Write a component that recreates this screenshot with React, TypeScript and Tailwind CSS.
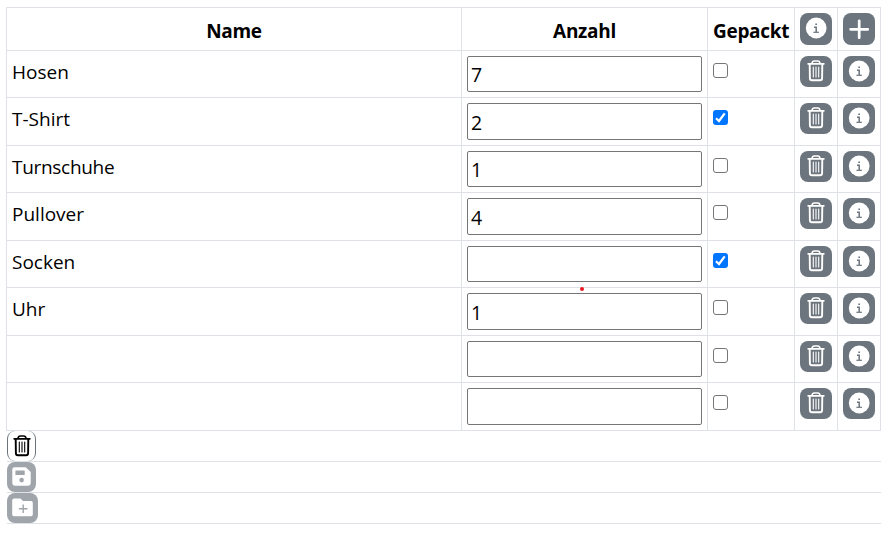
import { ReactNode } from "react";

type Item = { name: string; count: string; packed: boolean };

const items: Item[] = [
  { name: "Hosen", count: "7", packed: false },
  { name: "T-Shirt", count: "2", packed: true },
  { name: "Turnschuhe", count: "1", packed: false },
  { name: "Pullover", count: "4", packed: false },
  { name: "Socken", count: "", packed: true },
  { name: "Uhr", count: "1", packed: false },
  { name: "", count: "", packed: false },
  { name: "", count: "", packed: false },
];

const columns = "grid grid-cols-[455px_246px_87px_43px_43px]";
const cell = "border-l border-t border-[#dee2e6] pt-[5px] pl-[5px]";

function InfoIcon() {
  return (
    <svg viewBox="0 0 22 22" className="mb-[2px] size-[22px]">
      <circle cx="11.2" cy="11" r="10.4" fill="currentColor" />
      <g stroke="#6c757d" fill="none">
        <path d="M10.3 7.3h1.7" strokeWidth="1.6" />
        <path d="M9 10.3h2.2v5" strokeWidth="1.5" />
        <path d="M8.4 15.3h5.5" strokeWidth="1.2" />
      </g>
    </svg>
  );
}

function PlusIcon() {
  return (
    <svg viewBox="0 0 20 20" className="mb-px size-5" fill="none" stroke="currentColor" strokeWidth="2.7">
      <path d="M10.2 1.8v17M1.6 10.3h17.2" strokeLinecap="round" />
    </svg>
  );
}

function TrashIcon() {
  return (
    <svg viewBox="0 0 18 22" className="h-[22px] w-[18px]" fill="none" stroke="currentColor" strokeLinecap="round">
      <path d="M5 3.2C5.2 1.7 6 1 7.2 1h3.6c1.2 0 2 .7 2.2 2.2" strokeWidth="1.6" />
      <path d="M1.2 3.8h15.6" strokeWidth="1.8" />
      <path d="M2.7 4.2l.2 14c0 1.3.7 2 2 2h8.2c1.3 0 2-.7 2-2l.2-14" strokeWidth="1.9" />
      <path d="M6.3 7v10M9 7v10M11.7 7v10" strokeWidth="1.1" />
    </svg>
  );
}

function SaveIcon() {
  return (
    <svg viewBox="0 0 19 19" className="mb-px size-[19px]">
      <path
        d="M2.5 .3h11.2l5 4.8v11.2a2.4 2.4 0 0 1-2.4 2.4H2.7A2.4 2.4 0 0 1 .3 16.3V2.6A2.3 2.3 0 0 1 2.5 .3z"
        fill="currentColor"
      />
      <rect x="3.4" y="3.5" width="9.3" height="4.4" rx=".5" fill="#9fa5aa" />
      <circle cx="9.6" cy="13.1" r="2.3" fill="#9fa5aa" />
    </svg>
  );
}

function FolderAddIcon() {
  return (
    <svg viewBox="0 0 21 19" className="mb-px h-[19px] w-[21px]">
      <path
        d="M2 .4h6.6l2.3 2.5H19a1.8 1.8 0 0 1 1.8 1.8v11.8a1.8 1.8 0 0 1-1.8 1.8H2A1.8 1.8 0 0 1 .2 16.5V2.2A1.8 1.8 0 0 1 2 .4z"
        fill="currentColor"
      />
      <path d="M11.2 6.4v8.6M6.9 10.7h8.6" stroke="#9fa5aa" strokeWidth="1.4" />
    </svg>
  );
}

function IconButton({ tall, children }: { tall?: boolean; children: ReactNode }) {
  return (
    <button
      className={`flex w-8 items-center justify-center rounded-lg bg-[#6c757d] text-white ${tall ? "h-8" : "h-[31px]"}`}
    >
      {children}
    </button>
  );
}

function Checkbox({ checked }: { checked: boolean }) {
  return (
    <span
      role="checkbox"
      aria-checked={checked}
      className={`mt-[7px] flex size-[15px] items-center justify-center rounded-[3px] ${
        checked ? "bg-[#0075ff]" : "border border-[#767676] bg-white"
      }`}
    >
      {checked && (
        <svg viewBox="0 0 15 15" className="size-[15px]" fill="none" stroke="white" strokeWidth="2.2">
          <path d="M3 8.2 L6 11 L11.7 3.4" />
        </svg>
      )}
    </span>
  );
}

export default function App() {
  return (
    <div className="h-[535px] w-[895px] bg-white pl-[6px] pt-[7px] font-['Open_Sans','Noto_Sans',sans-serif] text-[19px] leading-[30px] text-black">
      <div className="w-[875px] border-r border-[#dee2e6]">
        <div className={`${columns} h-[43px] font-bold tracking-[-0.3px]`}>
          <div className={`${cell} pr-[5px] pt-[8px] text-center`}>Name</div>
          <div className={`${cell} pr-[5px] pt-[8px] text-center`}>Anzahl</div>
          <div className={`${cell} pt-[8px]`}>Gepackt</div>
          <div className={cell}>
            <IconButton tall>
              <InfoIcon />
            </IconButton>
          </div>
          <div className={cell}>
            <IconButton tall>
              <PlusIcon />
            </IconButton>
          </div>
        </div>
        {items.map((item, i) => (
          <div key={i} className={`${columns} ${i % 2 ? "h-12" : "h-[47px]"}`}>
            <div className={cell}>
              <div className={`mt-[1px] ${item.name.length > 8 ? "tracking-[-0.3px]" : ""}`}>{item.name}</div>
            </div>
            <div className={cell}>
              <input
                readOnly
                value={item.count}
                className={`block w-[235px] rounded-[2px] border border-[#767676] bg-white pl-[3px] pt-px text-[19.5px] outline-none ${
                  i % 2 ? "h-[37px]" : "h-9"
                }`}
              />
            </div>
            <div className={cell}>
              <Checkbox checked={item.packed} />
            </div>
            <div className={cell}>
              <IconButton>
                <span className="pb-[2px]">
                  <TrashIcon />
                </span>
              </IconButton>
            </div>
            <div className={cell}>
              <IconButton>
                <InfoIcon />
              </IconButton>
            </div>
          </div>
        ))}
      </div>
      <div className="w-[875px] border-t border-[#dee2e6] pl-[1px]">
        <div className="h-[31px] border-b border-[#dee2e6]">
          <button className="flex h-[30px] w-[29px] items-center justify-center rounded-lg border-x border-[#6c757d] bg-white text-black">
            <TrashIcon />
          </button>
        </div>
        <div className="h-[31px] border-b border-[#dee2e6]">
          <button className="flex h-[30px] w-[29px] items-center justify-center rounded-lg bg-[#9fa5aa] pr-px text-white">
            <SaveIcon />
          </button>
        </div>
        <div className="h-[31px] border-b border-[#dee2e6]">
          <button className="flex h-[30px] w-[31px] items-center justify-center rounded-lg bg-[#9fa5aa] pr-px text-white">
            <FolderAddIcon />
          </button>
        </div>
      </div>
      <div className="relative">
        <span className="absolute left-[574px] top-[-237px] size-1 rounded-full bg-[#e81c24]" />
      </div>
    </div>
  );
}
